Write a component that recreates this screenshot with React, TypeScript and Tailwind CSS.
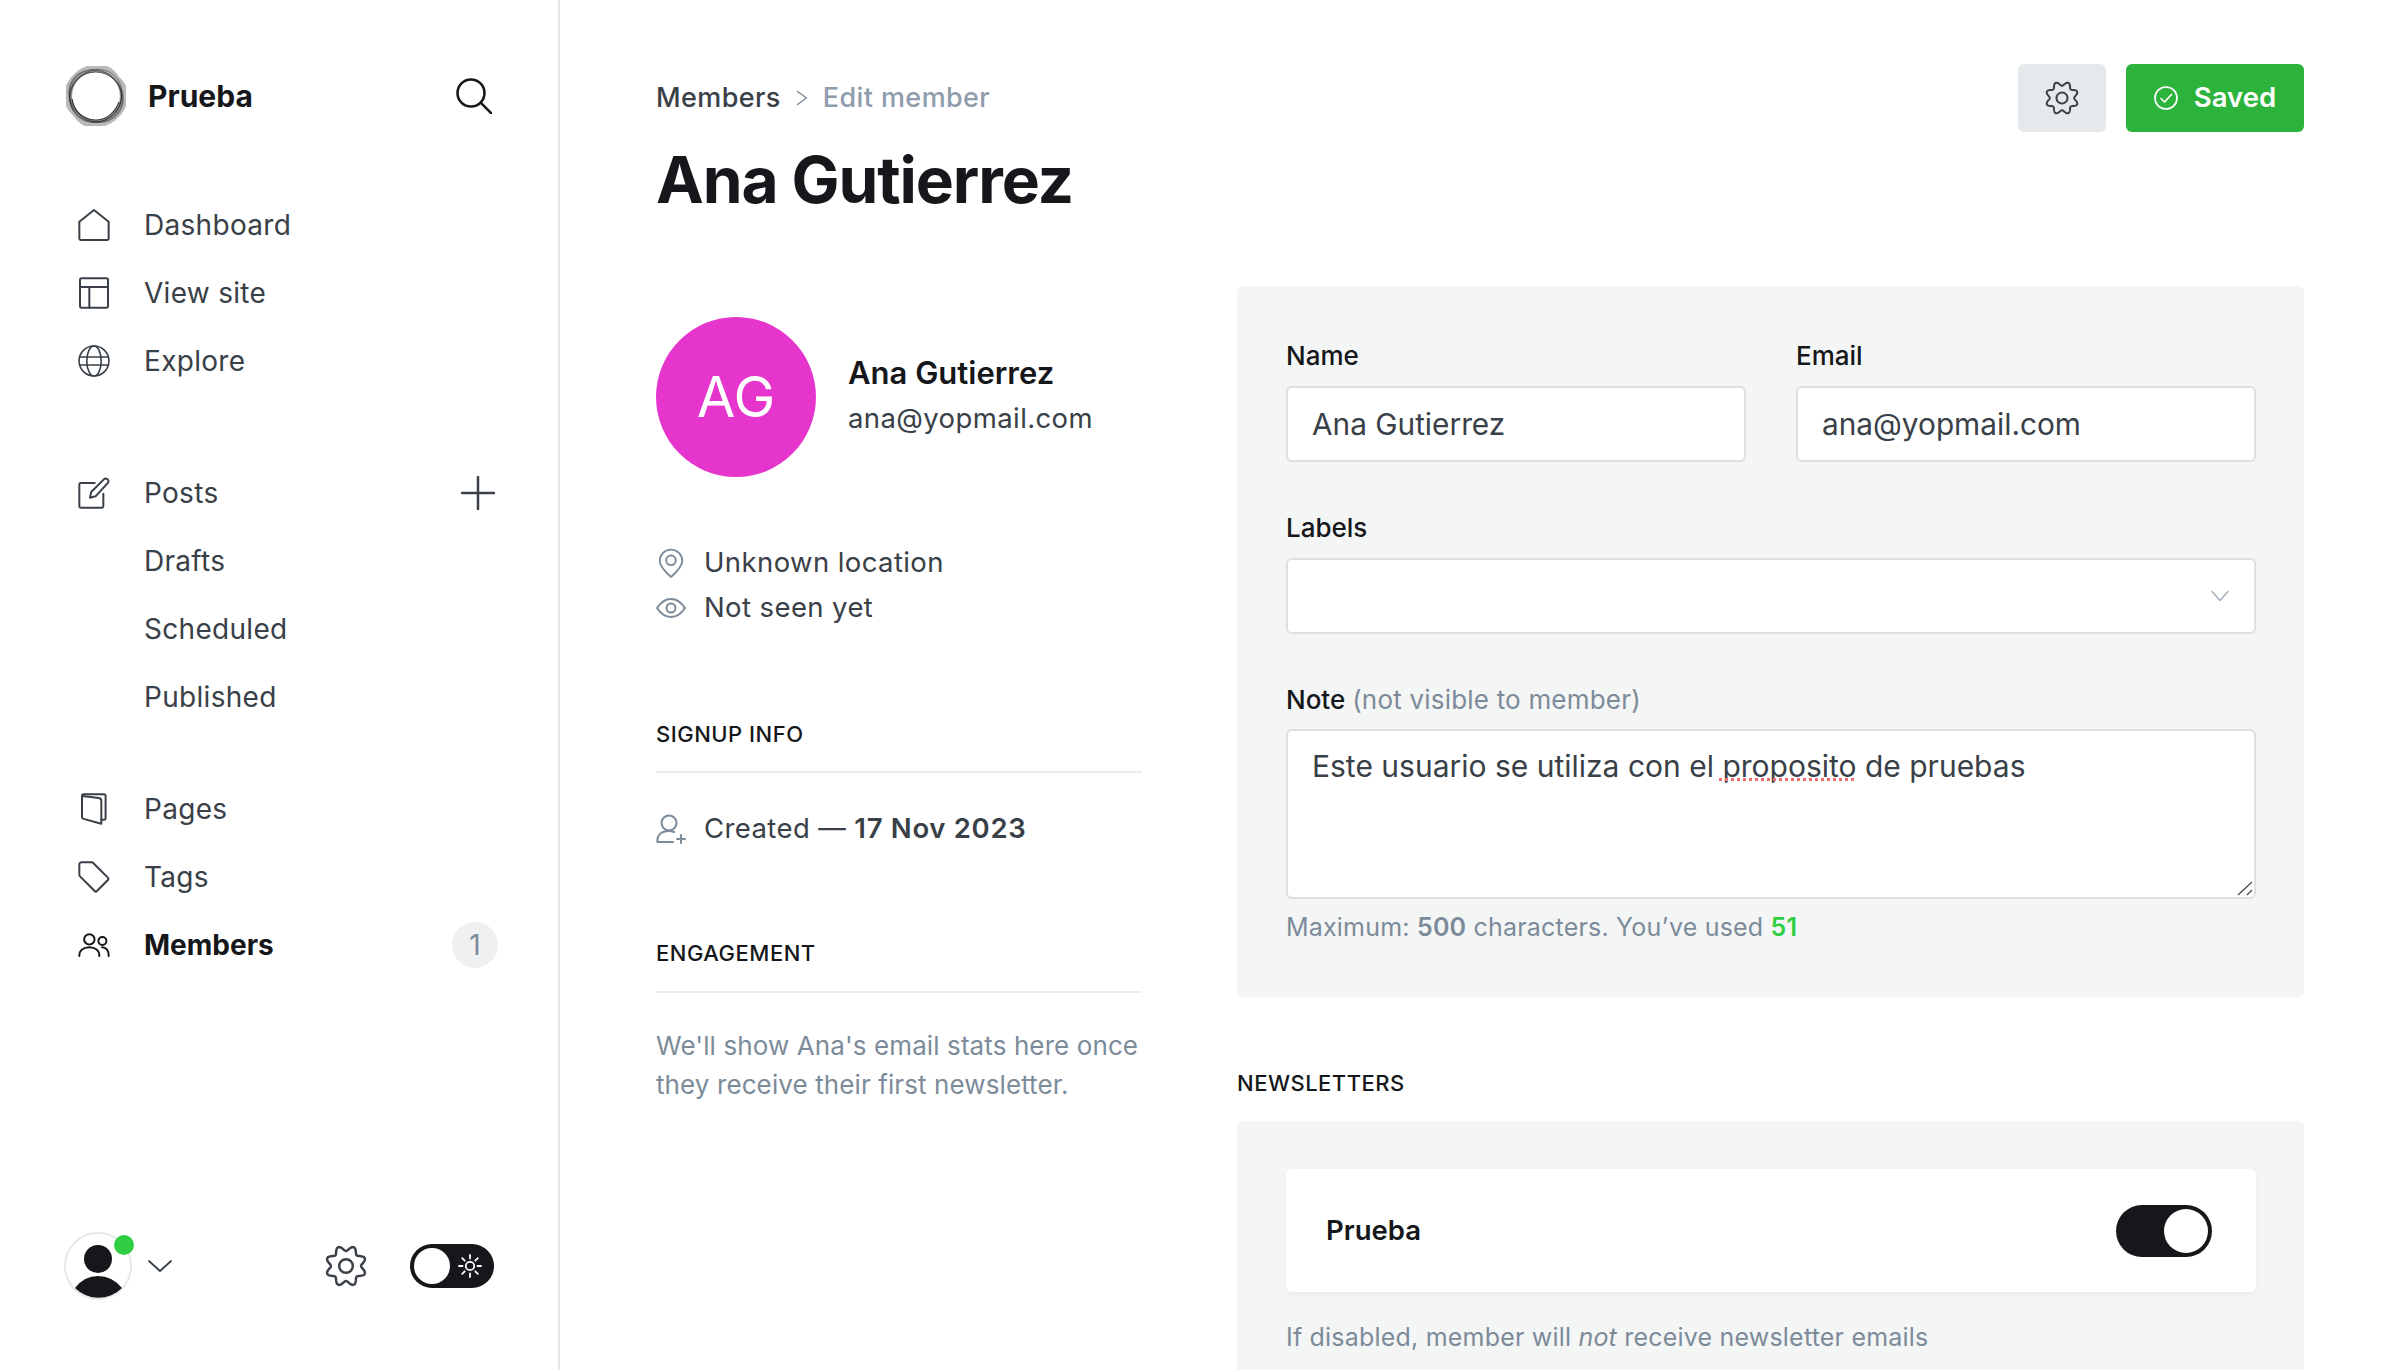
import React from "react";

type IconProps = { className?: string };

const Line = ({ className, children, sw = 1.5 }: IconProps & { children: React.ReactNode; sw?: number }) => (
  <svg
    viewBox="0 0 24 24"
    fill="none"
    stroke="currentColor"
    strokeWidth={sw}
    strokeLinecap="round"
    strokeLinejoin="round"
    className={className}
  >
    {children}
  </svg>
);

// wavy 8 tooth outline, same as the ghost cog
const gearPath = (() => {
  const pts: string[] = [];
  for (let i = 0; i < 160; i++) {
    const t = (i / 160) * Math.PI * 2;
    const r = 10.1 - 1.5 * Math.cos(8 * t);
    pts.push(`${(12 + r * Math.sin(t)).toFixed(2)} ${(12 - r * Math.cos(t)).toFixed(2)}`);
  }
  return `M${pts.join("L")}Z`;
})();

const Gear = ({ className }: IconProps) => (
  <Line className={className} sw={1.4}>
    <path d={gearPath} />
    <circle cx="12" cy="12" r="3.9" />
  </Line>
);

const House = ({ className }: IconProps) => (
  <Line className={className}>
    <path d="M1 9.500 12 .8l11 8.700v12.700a1 1 0 0 1-1 1H2a1 1 0 0 1-1-1Z" />
  </Line>
);

const Layout = ({ className }: IconProps) => (
  <Line className={className}>
    <rect x="1.500" y="1" width="21" height="22" rx="1.200" />
    <path d="M1.500 7.500h21M8.500 7.500V23" />
  </Line>
);

const Globe = ({ className }: IconProps) => (
  <Line className={className} sw={1.2}>
    <circle cx="12" cy="12" r="11.200" />
    <ellipse cx="12" cy="12" rx="5.400" ry="11.200" />
    <path d="M1.200 9h21.600M1.200 15h21.600" />
  </Line>
);

const Compose = ({ className }: IconProps) => (
  <Line className={className}>
    <path d="M12.500 4.500H2a1 1 0 0 0-1 1V22a1 1 0 0 0 1 1h16a1 1 0 0 0 1-1v-9.500" />
    <path d="M9 15.500l.9-4.200L19.600 1.600a2 2 0 0 1 2.800 2.800l-9.200 10.100Z" />
  </Line>
);

const Pages = ({ className }: IconProps) => (
  <Line className={className}>
    <path d="M3 2.200c0-.8.5-1.200 1.200-1.200h15.300c.8 0 1.200.5 1.200 1.200v16.600c0 .8-.5 1.200-1.200 1.200h-2" />
    <path d="M3 2.200l12.600 1.600c1.200.2 1.900 1 1.900 2.200V23L4.200 19.400C3.400 19.100 3 18.600 3 17.800Z" />
  </Line>
);

const Tag = ({ className }: IconProps) => (
  <Line className={className}>
    <path d="M1 2.600C1 1.600 1.600 1 2.600 1h7.600c.5 0 .9.2 1.200.5l11 11c.5.5.5 1.200 0 1.700l-8.200 8.300c-.5.5-1.200.5-1.700 0l-11-11c-.3-.3-.5-.7-.5-1.200Z" />
  </Line>
);

const People = ({ className }: IconProps) => (
  <svg viewBox="0 0 24 18" fill="none" stroke="currentColor" strokeWidth="1.500" strokeLinecap="round" className={className}>
    <circle cx="8.500" cy="4.800" r="3.900" />
    <circle cx="18.300" cy="6" r="3" />
    <path d="M1 17.200c0-4 3-6.500 7.500-6.500s7.500 2.500 7.500 6.500" />
    <path d="M18 10.600c3.300 0 5.200 2.600 5 6.600" />
  </svg>
);

// hand drawn ring: two grey bands under a few loose strokes
const Logo = () => (
  <svg viewBox="0 0 60 60" fill="none" className="h-[60px] w-[60px] shrink-0 text-[#15171a]">
    <path
      fillRule="evenodd"
      fill="currentColor"
      fillOpacity="0.3"
      d="M53 10.700A30.500 26.500 -40 1 0 7 49.300A30.500 26.500 -40 1 0 53 10.700ZM6 30A24 24 0 1 0 54 30A24 24 0 1 0 6 30Z"
    />
    <path
      fillRule="evenodd"
      fill="currentColor"
      fillOpacity="0.22"
      d="M53.800 46.600A29 26 35 1 0 6.200 13.400A29 26 35 1 0 53.800 46.600ZM6 30A24 24 0 1 0 54 30A24 24 0 1 0 6 30Z"
    />
    <g stroke="currentColor">
      <ellipse cx="30" cy="30" rx="27.500" ry="25" strokeWidth="0.800" strokeOpacity="0.5" transform="rotate(-50 30 30)" />
      <ellipse cx="30" cy="30" rx="28" ry="25" strokeWidth="0.800" strokeOpacity="0.5" transform="rotate(40 30 30)" />
      <ellipse cx="29.500" cy="31" rx="26" ry="25" strokeWidth="0.900" strokeOpacity="0.75" />
    </g>
    <path d="M6 33c2 13 12 21 24 21 10 0 19-7 23-18" stroke="currentColor" strokeWidth="1.200" strokeOpacity="0.85" />
  </svg>
);

const navClass = "flex h-[68px] items-center pl-[78px] pr-[60px] text-[28px] text-[#394047]";

const NavRow = ({ icon, label }: { icon?: React.ReactNode; label: string }) => (
  <div className={navClass}>
    <span className="mr-[34px] flex w-[32px] shrink-0 justify-center">{icon}</span>
    <span className="tracking-[0.3px]">{label}</span>
  </div>
);

const Sidebar = () => (
  <aside className="flex h-full w-[560px] shrink-0 flex-col border-r-2 border-[#e6e9eb] pt-[66px] pb-[70px]">
    <div className="flex h-[60px] items-center pl-[66px] pr-[66px]">
      <Logo />
      <span className="ml-[22px] text-[30px] font-bold text-[#15171a]">Prueba</span>
      <svg viewBox="0 0 24 24" fill="none" stroke="#15171a" strokeWidth="1.7" strokeLinecap="round" className="ml-auto h-[36px] w-[36px]">
        <circle cx="10" cy="10" r="9" />
        <path d="M16.600 16.600 23.500 23.500" />
      </svg>
    </div>

    <nav className="mt-[65px]">
      <NavRow icon={<House className="h-[32px] w-[32px]" />} label="Dashboard" />
      <NavRow icon={<Layout className="h-[32px] w-[32px]" />} label="View site" />
      <NavRow icon={<Globe className="h-[32px] w-[32px]" />} label="Explore" />
    </nav>

    <nav className="mt-[64px]">
      <div className={navClass}>
        <span className="mr-[34px] flex w-[32px] shrink-0 justify-center">
          <Compose className="h-[32px] w-[32px]" />
        </span>
        <span className="tracking-[0.3px]">Posts</span>
        <svg viewBox="0 0 34 34" stroke="#394047" strokeWidth="2.500" strokeLinecap="round" className="ml-auto mr-[3px] h-[34px] w-[34px]">
          <path d="M17 1v32M1 17h32" />
        </svg>
      </div>
      <NavRow label="Drafts" />
      <NavRow label="Scheduled" />
      <NavRow label="Published" />
    </nav>

    <nav className="mt-[44px]">
      <NavRow icon={<Pages className="h-[32px] w-[32px]" />} label="Pages" />
      <NavRow icon={<Tag className="h-[32px] w-[32px]" />} label="Tags" />
      <div className={navClass}>
        <span className="mr-[34px] flex w-[32px] shrink-0 justify-center text-[#15171a]">
          <People className="h-[24px] w-[32px]" />
        </span>
        <span className="font-bold text-[#15171a]">Members</span>
        <span className="ml-auto flex h-[46px] w-[46px] items-center justify-center rounded-full bg-[#eef0f2] text-[28px] text-[#7c8b9a]">
          1
        </span>
      </div>
    </nav>

    <div className="mt-auto flex items-center pl-[64px]">
      <div className="relative h-[68px] w-[68px] shrink-0">
        <svg viewBox="0 0 68 68" className="h-[68px] w-[68px]">
          <circle cx="34" cy="34" r="33" fill="#fff" stroke="#e6e9eb" strokeWidth="2" />
          <circle cx="34" cy="27" r="14" fill="#15171a" />
          <path d="M11 56Q20 44 34 44Q48 44 58 56A33 33 0 0 1 11 56Z" fill="#15171a" />
        </svg>
        <span className="absolute left-[50px] top-[3px] h-[20px] w-[20px] rounded-full bg-[#30cf43]" />
      </div>
      <svg viewBox="0 0 24 12" fill="none" stroke="#394047" strokeWidth="1.800" strokeLinecap="round" strokeLinejoin="round" className="ml-[16px] h-[12px] w-[24px]">
        <path d="M1 1l11 10L23 1" />
      </svg>
      <Gear className="ml-[153px] h-[42px] w-[42px] text-[#394047]" />
      <div className="ml-[43px] flex h-[44px] w-[84px] items-center justify-between rounded-full bg-[#15171a] pl-[4px] pr-[12px]">
        <span className="h-[36px] w-[36px] rounded-full bg-white" />
        <svg viewBox="0 0 24 24" fill="none" stroke="#fff" strokeWidth="1.800" strokeLinecap="round" className="h-[24px] w-[24px]">
          <circle cx="12" cy="12" r="4.200" />
          <path d="M12 1v3.500M12 19.500V23M1 12h3.500M19.500 12H23M4.200 4.200l2.500 2.500M17.300 17.300l2.500 2.500M4.200 19.800l2.500-2.500M17.300 6.700l2.500-2.500" />
        </svg>
      </div>
    </div>
  </aside>
);

const labelClass = "mb-[14px] block text-[26px] leading-[32px] font-medium text-[#15171a]";
const fieldClass =
  "block h-[76px] w-full rounded-[6px] border-2 border-[#dddfe1] bg-white px-[24px] text-[29.800px] text-[#394047] outline-none";

const ProfileColumn = () => (
  <div className="w-[486px] shrink-0 pt-[31px]">
    <div className="flex items-center">
      <div className="flex h-[160px] w-[160px] shrink-0 items-center justify-center rounded-full bg-[#e535cc] text-[56px] text-white">
        AG
      </div>
      <div className="ml-[32px] -mt-[5px]">
        <div className="text-[31px] leading-[46px] font-semibold text-[#15171a]">Ana Gutierrez</div>
        <div className="text-[27.500px] leading-[44px] tracking-[0.4px] text-[#394047]">ana@yopmail.com</div>
      </div>
    </div>

    <div className="mt-[63px] text-[27.500px] leading-[45px] tracking-[0.4px] text-[#394047]">
      <div className="flex items-center">
        <span className="mr-[18px] flex w-[30px] justify-center text-[#7c8b9a]">
          <svg viewBox="0 0 24 28" fill="none" stroke="currentColor" strokeWidth="1.800" strokeLinejoin="round" className="h-[30px] w-[26px]">
            <path d="M12 27C5 21 1.500 16.500 1.500 12a10.500 10.500 0 0 1 21 0c0 4.500-3.500 9-10.500 15Z" />
            <circle cx="12" cy="11.500" r="4.500" />
          </svg>
        </span>
        Unknown location
      </div>
      <div className="flex items-center">
        <span className="mr-[18px] flex w-[30px] justify-center text-[#7c8b9a]">
          <svg viewBox="0 0 30 20" fill="none" stroke="currentColor" strokeWidth="2" strokeLinejoin="round" className="h-[20px] w-[30px]">
            <path d="M1 10C5 4 10 1 15 1s10 3 14 9c-4 6-9 9-14 9S5 16 1 10Z" />
            <circle cx="15" cy="10" r="4.500" />
          </svg>
        </span>
        Not seen yet
      </div>
    </div>

    <h4 className="mt-[88px] h-[55px] border-b-2 border-[#e9ecee] text-[22px] leading-[32px] font-medium tracking-[0.5px] text-[#15171a]">
      SIGNUP INFO
    </h4>
    <div className="mt-[33px] flex items-center text-[27.500px] leading-[45px] tracking-[0.4px] text-[#394047]">
      <span className="mr-[18px] flex w-[30px] justify-center text-[#7c8b9a]">
        <svg viewBox="0 0 30 30" fill="none" stroke="currentColor" strokeWidth="2" strokeLinecap="round" className="h-[30px] w-[30px]">
          <circle cx="13" cy="9" r="7.500" />
          <path d="M1.500 28c-1-7 4-11 11.500-11 2 0 3.500.3 5 1M1.500 28H17M25 21v8M21 25h8" />
        </svg>
      </span>
      <span>
        Created — <span className="font-semibold tracking-[0.7px]">17 Nov 2023</span>
      </span>
    </div>

    <h4 className="mt-[86px] h-[56px] border-b-2 border-[#e9ecee] text-[22px] leading-[32px] font-medium tracking-[0.5px] text-[#15171a]">
      ENGAGEMENT
    </h4>
    <p className="mt-[34px] text-[26px] leading-[38.500px] tracking-[0.1px] text-[#7c8b9a]">
      We'll show Ana's email stats here once they receive their first newsletter.
    </p>
  </div>
);

const DetailsColumn = () => (
  <div className="min-w-0 flex-1">
    <div className="rounded-[6px] bg-[#f4f5f5] pl-[49px] pr-[48px] pt-[54px] pb-[54px]">
      <div className="grid grid-cols-2 gap-x-[50px]">
        <label>
          <span className={labelClass}>Name</span>
          <input readOnly value="Ana Gutierrez" className={fieldClass} />
        </label>
        <label>
          <span className={labelClass}>Email</span>
          <input readOnly value="ana@yopmail.com" className={fieldClass} />
        </label>
      </div>

      <div className="mt-[50px]">
        <span className={labelClass}>Labels</span>
        <div className={`${fieldClass} flex items-center justify-end`}>
          <svg viewBox="0 0 18 12" fill="none" stroke="#a8b2bc" strokeWidth="1.600" strokeLinecap="round" strokeLinejoin="round" className="mr-[1px] h-[12px] w-[18px]">
            <path d="M1 1.500l8 9 8-9" />
          </svg>
        </div>
      </div>

      <div className="mt-[50px]">
        <span className="mb-[13px] block text-[26px] leading-[32px] font-medium text-[#15171a]">
          Note <span className="font-normal tracking-[0.2px] text-[#7c8b9a]">(not visible to member)</span>
        </span>
        <div className="relative">
          <textarea
            readOnly
            spellCheck={false}
            value="Este usuario se utiliza con el proposito de pruebas"
            className="block h-[170px] w-full resize-none rounded-[6px] border-2 border-[#dddfe1] bg-white px-[24px] py-[17px] text-[30px] leading-[36px] text-[#394047] outline-none"
          />
          <span className="absolute left-[433px] top-[49px] h-[3px] w-[135px] border-b-[3px] border-dotted border-[#f26d6d]" />
          <svg viewBox="0 0 16 16" stroke="#444b52" strokeWidth="1.300" className="absolute bottom-[3px] right-[3px] h-[16px] w-[16px]">
            <path d="M1 15 15 2M10 15l5-5" />
          </svg>
        </div>
        <p className="mt-[12px] text-[25px] leading-[32px] tracking-[0.2px] text-[#7c8b9a]">
          Maximum: <b className="font-semibold">500</b> characters. You’ve used{" "}
          <b className="font-semibold text-[#30cf43]">51</b>
        </p>
      </div>
    </div>

    <h4 className="mt-[70px] mb-[22px] text-[22px] leading-[32px] font-medium tracking-[0.5px] text-[#15171a]">
      NEWSLETTERS
    </h4>

    <div className="rounded-[6px] bg-[#f4f5f5] pl-[49px] pr-[48px] pt-[48px] pb-[60px]">
      <div className="flex h-[123px] items-center justify-between rounded-[6px] bg-white pl-[40px] pr-[44px] shadow-[0_2px_6px_rgba(0,0,0,0.05)]">
        <span className="text-[27.500px] font-semibold text-[#15171a]">Prueba</span>
        <div className="flex h-[52px] w-[96px] items-center justify-end rounded-full bg-[#15171a] pr-[4px]">
          <span className="h-[44px] w-[44px] rounded-full bg-white" />
        </div>
      </div>
      <p className="mt-[29px] text-[25px] leading-[32px] tracking-[0.2px] text-[#7c8b9a]">
        If disabled, member will <i>not</i> receive newsletter emails
      </p>
    </div>
  </div>
);

export default function App() {
  return (
    <div className="flex h-[1370px] w-full overflow-hidden bg-white antialiased [font-family:Inter,sans-serif]">
      <Sidebar />
      <main className="min-w-0 flex-1 px-[96px]">
        <header className="flex h-[286px] items-start justify-between pt-[64px]">
          <div className="pt-[18px]">
            <div className="flex items-center text-[27px] leading-[32px] font-medium tracking-[0.4px]">
              <span className="text-[#394047]">Members</span>
              <svg viewBox="0 0 12 16" fill="none" stroke="#7c8b9a" strokeWidth="1.500" strokeLinecap="round" strokeLinejoin="round" className="mx-[15px] h-[16px] w-[12px]">
                <path d="M1.500 1.500 10.500 8l-9 6.500" />
              </svg>
              <span className="text-[#8e9cac]">Edit member</span>
            </div>
            <h1 className="mt-[30px] text-[64px] leading-[72px] font-bold tracking-[-1.100px] text-[#15171a]">
              Ana Gutierrez
            </h1>
          </div>
          <div className="flex gap-[20px]">
            <button className="flex h-[68px] w-[88px] items-center justify-center rounded-[6px] bg-[#e6e9eb] text-[#394047]">
              <Gear className="h-[34px] w-[34px]" />
            </button>
            <button className="flex h-[68px] w-[178px] items-center justify-center gap-[16px] rounded-[6px] bg-[#2bb33c] text-[27.500px] font-semibold text-white">
              <svg viewBox="0 0 24 24" fill="none" stroke="currentColor" strokeWidth="1.700" strokeLinecap="round" strokeLinejoin="round" className="h-[24px] w-[24px]">
                <circle cx="12" cy="12" r="11" />
                <path d="M7 12.500l3.500 3.500 7-7.500" />
              </svg>
              Saved
            </button>
          </div>
        </header>
        <div className="flex gap-[95px]">
          <ProfileColumn />
          <DetailsColumn />
        </div>
      </main>
    </div>
  );
}
